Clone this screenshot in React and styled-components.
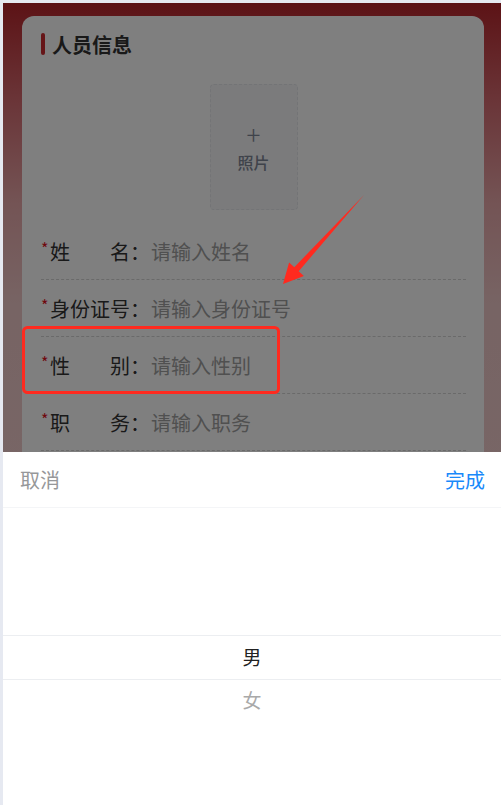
import React from 'react'
import styled, { createGlobalStyle } from 'styled-components'

const GlobalStyle = createGlobalStyle`
  html, body {
    margin: 0;
    padding: 0;
    background: #e6e9f1;
  }
  body {
    font-family: "Noto Sans CJK SC", "Noto Sans", sans-serif;
  }
`

const Frame = styled.div`
  position: relative;
  margin: 3px 0 0 3px;
  width: 498px;
  height: 802px;
  overflow: hidden;
  background: linear-gradient(180deg, #b9262c 0px, #d66c72 100px, #e8a8aa 200px, #efc8c8 300px, #f2d4d4 100%);
`

const Card = styled.div`
  margin: 13px 17px 0 19px;
  background: #fff;
  border-radius: 12px;
  padding: 16px 18px 40px 19px;
`

const Title = styled.div`
  display: flex;
  align-items: center;
  gap: 7px;
  height: 24px;
  font-size: 20px;
  font-weight: 700;
  color: #333;
`

const TitleBar = styled.span`
  width: 4px;
  height: 22px;
  border-radius: 2px;
  background: #cc2a30;
`

const PhotoBox = styled.div`
  margin: 28px auto 0;
  width: 88px;
  height: 126px;
  box-sizing: border-box;
  border: 1px dashed #e6e8ec;
  border-radius: 4px;
  background: #f6f7f9;
  display: flex;
  flex-direction: column;
  align-items: center;
  justify-content: center;
  gap: 4px;
  color: #7f8696;
`

const Plus = styled.span`
  font-size: 26px;
  line-height: 26px;
  font-weight: 300;
`

const PhotoText = styled.span`
  font-size: 16px;
  line-height: 22px;
  font-weight: 500;
`

const Rows = styled.div`
  margin-top: 13px;
`

const Row = styled.div`
  display: flex;
  align-items: center;
  height: 57px;
  box-sizing: border-box;
  border-bottom: 1px dashed #d4d4d4;
  font-size: 20px;
`

const Star = styled.span`
  width: 9px;
  align-self: flex-start;
  margin-top: 17px;
  color: #e0101c;
  font-size: 16px;
  line-height: 16px;
`

const Label = styled.span`
  width: 80px;
  text-align: justify;
  text-align-last: justify;
  color: #333;
`

const Colon = styled.span`
  width: 21px;
  color: #333;
`

const Placeholder = styled.span`
  color: #a0a0a0;
`

const Overlay = styled.div`
  position: absolute;
  inset: 0;
  background: rgba(0, 0, 0, 0.5);
`

const Annotations = styled.svg`
  position: absolute;
  left: -3px;
  top: -3px;
  width: 501px;
  height: 805px;
  pointer-events: none;
`

const Popup = styled.div`
  position: absolute;
  left: 0;
  right: 0;
  bottom: 0;
  height: 353px;
  background: #fff;
`

const Toolbar = styled.div`
  display: flex;
  justify-content: space-between;
  align-items: center;
  height: 56px;
  box-sizing: border-box;
  padding: 0 16px 0 17px;
  border-bottom: 1px solid #f4f5f7;
  font-size: 20px;
  line-height: 24px;
`

const ToolButton = styled.span`
  color: ${p => (p.$primary ? '#1989fa' : '#969799')};
`

const Column = styled.div`
  position: relative;
  height: 297px;
  padding-top: 127.5px;
  box-sizing: border-box;
`

const Option = styled.div`
  height: 42.5px;
  display: flex;
  align-items: center;
  justify-content: center;
  font-size: 19px;
  color: ${p => (p.$active ? '#222' : '#a9a9a9')};
`

const SelectedFrame = styled.div`
  position: absolute;
  left: 0;
  right: 0;
  top: 127px;
  height: 42.5px;
  border-top: 1px solid #eceef1;
  border-bottom: 1px solid #eceef1;
  pointer-events: none;
`

const fields = [
  { label: '姓名', placeholder: '请输入姓名' },
  { label: '身份证号', placeholder: '请输入身份证号' },
  { label: '性别', placeholder: '请输入性别' },
  { label: '职务', placeholder: '请输入职务' },
  { label: '联系电话', placeholder: '请输入联系电话' },
]

export default function App() {
  return (
    <>
      <GlobalStyle />
      <Frame>
        <Card>
          <Title>
            <TitleBar />
            人员信息
          </Title>
          <PhotoBox>
            <Plus>+</Plus>
            <PhotoText>照片</PhotoText>
          </PhotoBox>
          <Rows>
            {fields.map(f => (
              <Row key={f.label}>
                <Star>*</Star>
                <Label>{f.label}</Label>
                <Colon>：</Colon>
                <Placeholder>{f.placeholder}</Placeholder>
              </Row>
            ))}
          </Rows>
        </Card>

        <Overlay />

        <Annotations viewBox="0 0 501 805">
          <rect x="23.5" y="327.5" width="255" height="65" rx="4" fill="none" stroke="#ff2a1f" strokeWidth="3" />
          <path
            d="M364 195 L298.7 271.2 L303.9 276 L283 284 L289.1 262.5 L294.3 267.2 Z"
            fill="#ff2a1f"
          />
        </Annotations>

        <Popup>
          <Toolbar>
            <ToolButton>取消</ToolButton>
            <ToolButton $primary>完成</ToolButton>
          </Toolbar>
          <Column>
            <Option $active>男</Option>
            <Option>女</Option>
            <SelectedFrame />
          </Column>
        </Popup>
      </Frame>
    </>
  )
}
